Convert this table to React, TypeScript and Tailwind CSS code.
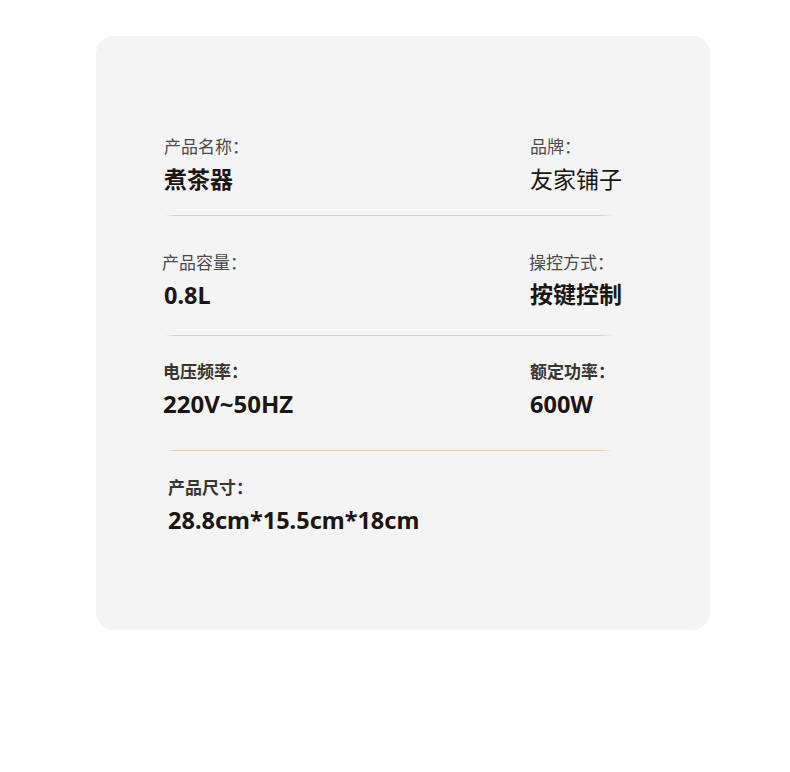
import React from "react";

const font = { fontFamily: '"Noto Sans", "Noto Sans CJK SC", sans-serif' };

function Divider({ className }: { className: string }) {
  return (
    <div
      className={`ml-[1px] w-[448px] h-px bg-[linear-gradient(90deg,#f4f4f4_0%,#edc9a9_2%,#edc9a9_97%,#f4f4f4_100%)] ${className}`}
    />
  );
}

export default function App() {
  return (
    <div className="w-[790px] h-[772px] bg-white pt-[36px] pl-[96px]" style={font}>
      <div className="w-[614px] h-[594px] rounded-[18px] bg-[#f4f4f4] pt-[100px] pl-[68px] text-[#1c1611]">
        {/* Row 1 */}
        <div className="flex h-[58px]">
          <div className="w-[366px]">
            <div className="h-[22px] text-[17px] leading-[22px] text-[#4a4a4a]">产品名称：</div>
            <div className="h-[30px] text-[23px] leading-[30px] mt-[6px] font-bold">煮茶器</div>
          </div>
          <div>
            <div className="h-[22px] text-[17px] leading-[22px] text-[#4a4a4a]">品牌：</div>
            <div className="h-[30px] text-[23px] leading-[30px] mt-[6px]">友家铺子</div>
          </div>
        </div>
        <Divider className="mt-[21px]" />
        {/* Row 2 */}
        <div className="flex h-[58px] mt-[36px]">
          <div className="w-[367px] -ml-[2px]">
            <div className="h-[22px] text-[17px] leading-[22px] text-[#4a4a4a]">产品容量：</div>
            <div className="h-[30px] text-[23.5px] leading-[30px] mt-[6px] ml-[2px] font-bold">0.8L</div>
          </div>
          <div>
            <div className="h-[22px] text-[17px] leading-[22px] text-[#4a4a4a]">操控方式：</div>
            <div className="h-[30px] text-[23px] leading-[30px] mt-[5px] ml-[1px] font-bold">按键控制</div>
          </div>
        </div>
        <Divider className="mt-[25px]" />
        {/* Row 3 */}
        <div className="flex h-[58px] mt-[25px]">
          <div className="w-[367px] -ml-[1px]">
            <div className="h-[22px] text-[17px] leading-[22px] text-[#3a3430] font-bold">电压频率：</div>
            <div className="h-[30px] text-[24px] leading-[30px] mt-[6px] font-bold">220V~50HZ</div>
          </div>
          <div>
            <div className="h-[22px] text-[17px] leading-[22px] text-[#3a3430] font-bold">额定功率：</div>
            <div className="h-[30px] text-[23.5px] leading-[30px] mt-[6px] font-bold">600W</div>
          </div>
        </div>
        <Divider className="mt-[31px]" />
        {/* Row 4 */}
        <div className="mt-[26px] ml-[4px]">
          <div className="h-[22px] text-[17px] leading-[22px] text-[#3a3430] font-bold">产品尺寸：</div>
          <div className="h-[30px] text-[23.5px] leading-[30px] mt-[6px] font-bold">28.8cm*15.5cm*18cm</div>
        </div>
      </div>
    </div>
  );
}
